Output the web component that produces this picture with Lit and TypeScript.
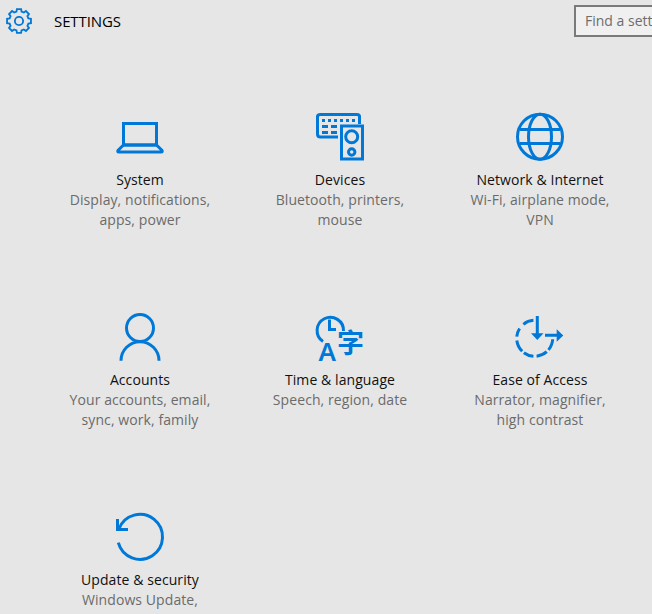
import { LitElement, html, css, svg } from "lit";
import { customElement } from "lit/decorators.js";

const pol = (cx: number, cy: number, r: number, deg: number) => {
  const a = (deg * Math.PI) / 180;
  return [+(cx + r * Math.sin(a)).toFixed(2), +(cy - r * Math.cos(a)).toFixed(2)];
};

const arc = (from: number, to: number) => {
  const [x1, y1] = pol(18.7, 26.3, 18, from);
  const [x2, y2] = pol(18.7, 26.3, 18, to);
  return `M${x1} ${y1}A18 18 0 0 0 ${x2} ${y2}`;
};

const gearPath = () => {
  const pts: string[] = [];
  for (let i = 0; i < 8; i++) {
    const c = i * 45;
    const seq: [number, number][] = [
      [9.0, c - 15],
      [11.2, c - 10],
      [11.2, c + 10],
      [9.0, c + 15],
    ];
    for (const [r, d] of seq) {
      const [x, y] = pol(12, 12, r, d);
      pts.push(`${x} ${y}`);
    }
  }
  return "M" + pts.join("L") + "Z";
};

const icons: Record<string, unknown> = {
  system: svg`
    <rect x="7.5" y="11.5" width="33" height="21.5"/>
    <path d="M7.5 33H40.5L45.8 38.2Q47 40 45 40H3Q1 40 2.2 38.2Z"/>`,
  devices: svg`
    <path d="M22 25H4.5Q1.5 25 1.5 22V4.5Q1.5 2.5 4.5 2.5H41Q43.5 2.5 43.5 4.5V12"/>
    <rect x="25.5" y="14" width="21" height="33"/>
    <circle cx="35.7" cy="24.7" r="6"/>
    <circle cx="35.7" cy="40" r="3.2"/>
    <g class="fill">
      <rect x="6" y="7" width="3" height="3"/><rect x="12" y="7" width="3" height="3"/>
      <rect x="18" y="7" width="3" height="3"/><rect x="24" y="7" width="3" height="3"/>
      <rect x="30" y="7" width="3" height="3"/><rect x="36" y="7" width="3" height="3"/>
      <rect x="6" y="13" width="6" height="3"/><rect x="15" y="13" width="6" height="3"/>
      <rect x="6" y="19" width="6" height="3"/><rect x="15" y="19" width="6" height="3"/>
    </g>`,
  network: svg`
    <circle cx="24" cy="24.7" r="22.5"/>
    <ellipse cx="24" cy="24.7" rx="11.5" ry="22.5"/>
    <path d="M4 17.5H44M4 31.5H44"/>`,
  accounts: svg`
    <circle cx="24" cy="16" r="13.5"/>
    <path d="M5 48.7A19 19 0 0 1 43 48.7"/>`,
  time: svg`
    <path d="M7 29.5A13.2 13.2 0 1 1 27.5 19"/>
    <path d="M13.5 7.5V17.5H20"/>
    <text class="glyph" x="2.5" y="49" font-size="26">A</text>
    <text class="glyph cjk" x="21" y="41" font-size="27">字</text>`,
  ease: svg`
    ${[[-4, -39], [-57, -85], [-97, -136], [-143, -176], [-186, -222], [-230, -267]].map(
      ([a, b]) => svg`<path d=${arc(a, b)}/>`
    )}
    <path d="M21.3 4V23M29 23.3H41"/>
    <path class="fill" d="M15 21.3H27.5L21.3 28Z"/>
    <path class="fill" d="M40.7 17.3V29.7L47.3 23.5Z"/>`,
  update: svg`
    <path d="M3 16.8A22.5 22.5 0 1 1 2.3 30.7"/>
    <path d="M1.5 7V17.5H12"/>`,
};

const items = [
  { icon: "system", title: "System", lines: ["Display, notifications,", "apps, power"] },
  { icon: "devices", title: "Devices", lines: ["Bluetooth, printers,", "mouse"] },
  { icon: "network", title: "Network & Internet", lines: ["Wi-Fi, airplane mode,", "VPN"] },
  { icon: "accounts", title: "Accounts", lines: ["Your accounts, email,", "sync, work, family"] },
  { icon: "time", title: "Time & language", lines: ["Speech, region, date"] },
  { icon: "ease", title: "Ease of Access", lines: ["Narrator, magnifier,", "high contrast"] },
  { icon: "update", title: "Update & security", lines: ["Windows Update,", "recovery, backup"] },
];

@customElement("app-root")
export class AppRoot extends LitElement {
  static styles = css`
    :host {
      display: block;
      width: 652px;
      height: 614px;
      overflow: hidden;
      background: #e6e6e6;
      font-family: "Open Sans", "Noto Sans", sans-serif;
    }
    .header {
      display: flex;
      align-items: center;
      height: 32px;
      padding-top: 5px;
      width: 800px;
    }
    .gear {
      width: 26px;
      height: 26px;
      margin-left: 6px;
      fill: none;
      stroke: #0078d7;
      stroke-width: 1.7;
    }
    .heading {
      margin-left: 22px;
      font-size: 15px;
      letter-spacing: -0.1px;
      color: #000;
      width: 520px;
    }
    .search {
      box-sizing: border-box;
      width: 200px;
      height: 32px;
      border: 2px solid #7a7a7a;
      background: #f0f0f0;
      padding-left: 9px;
      font-size: 14px;
      line-height: 27px;
      color: #6d6d6d;
    }
    .grid {
      display: grid;
      grid-template-columns: repeat(3, 200px);
      grid-auto-rows: 200px;
      margin: 75px 0 0 40px;
    }
    .item {
      display: flex;
      flex-direction: column;
      align-items: center;
      text-align: center;
      font-size: 14px;
      line-height: 20px;
      letter-spacing: 0.08px;
    }
    .icon {
      width: 48px;
      height: 50px;
      margin-bottom: 8px;
      fill: none;
      stroke: #0078d7;
      stroke-width: 3;
      overflow: visible;
    }
    .fill {
      fill: #0078d7;
      stroke: none;
    }
    .glyph {
      fill: #0078d7;
      stroke: none;
      font-family: "Noto Sans", sans-serif;
      font-weight: 600;
    }
    .cjk {
      font-family: "Noto Sans CJK SC", sans-serif;
      font-weight: 700;
    }
    .title {
      color: #111;
    }
    .desc {
      color: #6b6b6b;
    }
  `;

  render() {
    return html`
      <div class="header">
        <svg class="gear" viewBox="0 0 24 24" aria-hidden="true">
          <path d=${gearPath()} />
          <circle cx="12" cy="12" r="3.8" />
        </svg>
        <div class="heading">SETTINGS</div>
        <div class="search">Find a setting</div>
      </div>
      <div class="grid">
        ${items.map(
          (it) => html`
            <div class="item">
              <svg class="icon" viewBox="0 0 48 50" aria-hidden="true">${icons[it.icon]}</svg>
              <div class="title">${it.title}</div>
              ${it.lines.map((l) => html`<div class="desc">${l}</div>`)}
            </div>
          `
        )}
      </div>
    `;
  }
}
